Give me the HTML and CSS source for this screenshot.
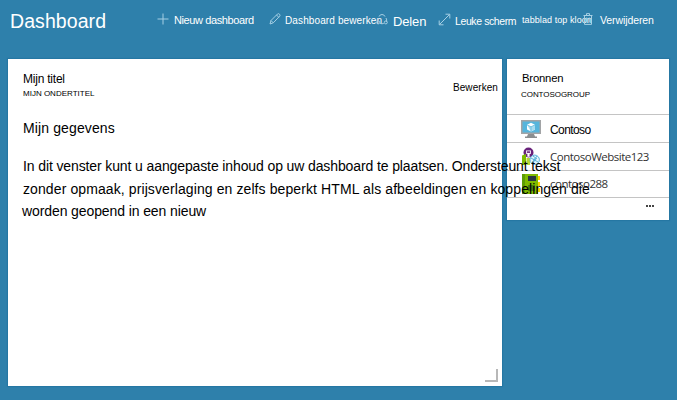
FILE: index.html
```html
<!DOCTYPE html>
<html lang="nl">
<head>
<meta charset="utf-8">
<title>Dashboard</title>
<link rel="stylesheet" href="styles.css">
</head>
<body>
<header class="toolbar">
  <h1>Dashboard</h1>
  <div class="action new"><svg width="12" height="12" viewBox="0 0 12 12"><path d="M6 .5v11M.5 6h11"/></svg><span>Nieuw dashboard</span></div>
  <div class="action edit"><svg width="12" height="12" viewBox="0 0 12 12"><path d="M1 11l1-3.5L8.5 1q1-.8 2 .2t.2 2L4.3 9.8 1 11M2 7.5l2.3 2.3M7.5 2l2.3 2.3"/></svg><span>Dashboard bewerken</span></div>
  <div class="action share"><svg width="12" height="12" viewBox="0 0 12 12"><path d="M3 3.6a3.2 3.2 0 0 1 6 0M2 5Q.6 7 1.8 9M10 5q1.4 2 .2 4M4.2 10.4q1.8.8 3.6 0"/><circle cx="2.2" cy="9.4" r="1.5"/><circle cx="9.8" cy="9.4" r="1.5"/></svg><span>Delen</span></div>
  <div class="action full"><svg width="13" height="13" viewBox="0 0 13 13"><path d="M1.5 11.5l10-10M7.5 1.2h4.3v4.3M1.2 7.5v4.3h4.3"/></svg><span>Leuke scherm</span></div>
  <div class="action clone"><span>tabblad top kloon</span></div>
  <div class="action delete"><svg width="10" height="12" viewBox="0 0 10 12"><path d="M.5 2.5h9M3.5 2V.6h3V2M1.5 3v8.4h7V3M3.7 4.5v5M6.3 4.5v5"/></svg><span>Verwijderen</span></div>
</header>
<main class="board">
  <section class="tile note">
    <div class="note-head">
      <div>
        <h2>Mijn titel</h2>
        <p class="subtitle">MIJN ONDERTITEL</p>
      </div>
      <span class="edit-link">Bewerken</span>
    </div>
    <h3>Mijn gegevens</h3>
    <p class="copy"><span class="line first">In dit venster kunt u aangepaste inhoud op uw dashboard te plaatsen. Ondersteunt tekst</span><span class="line second">zonder opmaak, prijsverlaging en zelfs beperkt HTML als afbeeldingen en koppelingen die</span><span class="line third">worden geopend in een nieuw</span></p>
    <i class="grip"></i>
  </section>
  <section class="tile resources">
    <div class="resources-head">
      <h2>Bronnen</h2>
      <p class="subtitle">CONTOSOGROUP</p>
    </div>
    <div class="row machine">
      <svg width="20" height="20" viewBox="0 0 20 20"><path fill="#a2a4a6" d="M0 1h20v14H0z"/><path fill="#56b5dc" d="M1.5 2.5h17v11h-17z"/><path fill="#8b8e90" d="M7 15h6l1 2.5h2V19H4v-1.5h2z"/><path fill="#fff" d="M10 3.8l4 2v4.6l-4 2.1-4-2.1V5.8z"/><path fill="#a9dcf0" d="M6 5.8l4 2 4-2v4.6l-4 2.1z"/><path fill="none" stroke="#56b5dc" stroke-width=".7" d="M6 5.8l4 2 4-2M10 7.8v4.7"/></svg>
      <span>Contoso</span>
    </div>
    <div class="row site">
      <svg width="20" height="20" viewBox="0 0 20 20"><circle cx="7.5" cy="5.5" r="5" fill="#68217a"/><path d="M5 3.5h5v3.2H8.6v3H6.4v-3H5z" fill="#fff"/><path d="M5.8 4.3h3.4v1.6H5.8z" fill="#68217a"/><path fill="#7fba00" d="M1 8.5l4-1.5v11H1z"/><path fill="#b8d432" d="M5.5 11H9v7H5.5z"/><circle cx="13.7" cy="12.8" r="4.7" fill="#e4f4fb" stroke="#59b4d9"/><path d="M10 11l7 4M11 16l5-7M12 9l4 3" fill="none" stroke="#59b4d9"/><circle cx="13.6" cy="13" r="1.4" fill="#59b4d9"/></svg>
      <span>ContosoWebsite123</span>
    </div>
    <div class="row storage">
      <svg width="20" height="20" viewBox="0 0 20 20"><path fill="#ffd500" d="M16 2h3v4h-3zM16 8h3v4h-3zM16 14h3v4h-3z"/><path fill="#7fba00" d="M1 0h16v20H1z"/><path fill="#5d9c04" d="M1 0h3v20H1z"/><path fill="#293640" d="M7 2h8v5H7z"/><path fill="#47800e" d="M7 11h7v6H7z"/></svg>
      <span>contoso288</span>
    </div>
    <div class="more"><i></i><i></i><i></i></div>
  </section>
</main>
</body>
</html>
```
FILE: styles.css
```css
* { box-sizing: border-box; }
body {
  margin: 0;
  height: 400px;
  overflow: hidden;
  background: #2e80ab;
  color: #000;
  font-family: "Liberation Sans", Arial, sans-serif;
}
h1, h2, h3, p { margin: 0; font-weight: 400; }
.toolbar {
  display: grid;
  grid-template-columns: 147px 112px 107px 62px 84px 61px 94px;
  height: 59px;
  padding: 0 0 0 10px;
  color: #fff;
  white-space: nowrap;
}
h1 { padding-top: 9px; font-size: 19.5px; line-height: 24px; letter-spacing: .08px; }
.action { display: flex; align-items: flex-start; line-height: 14px; }
.action svg { flex: none; margin-top: 13px; fill: none; stroke: #a5cfe4; stroke-width: 1; }
.new { font-size: 11px; letter-spacing: -.4px; }
.new span { margin: 13px 0 0 5px; }
.edit { font-size: 10px; letter-spacing: .12px; }
.edit span { margin: 14px 0 0 4px; }
.share { font-size: 13px; letter-spacing: -.15px; }
.share span { margin: 15px 0 0 5px; }
.full { font-size: 10.5px; letter-spacing: -.4px; }
.full span { margin: 14px 0 0 4px; }
.clone { font-size: 9px; letter-spacing: .08px; }
.clone span { margin: 13px 0 0; }
.delete { font-size: 10.5px; letter-spacing: -.1px; }
.delete span { margin: 13px 0 0 7px; }
.board {
  display: grid;
  grid-template-columns: 494px 162px;
  gap: 5px;
  align-items: start;
  padding-left: 8px;
}
.tile { background: #fff; box-shadow: 0 0 1px 1px #2577a3; }
.note {
  position: relative;
  z-index: 1;
  height: 327px;
  padding: 13px 4px 0 15px;
  white-space: nowrap;
}
.note-head { display: flex; justify-content: space-between; height: 47px; }
h2 { font-size: 12px; line-height: 14px; letter-spacing: -.22px; }
.subtitle { font-size: 8px; line-height: 10px; }
.note .subtitle { margin-top: 3px; }
.edit-link { margin-top: 9px; font-size: 10px; line-height: 14px; letter-spacing: .07px; }
h3 { font-size: 14px; line-height: 18px; letter-spacing: .12px; }
.copy { margin-top: 18px; font-size: 14px; line-height: 22.5px; }
.line { display: block; }
.first { letter-spacing: -.115px; }
.second { letter-spacing: .1px; }
.third { margin-left: -1px; letter-spacing: -.1px; }
.grip {
  position: absolute;
  right: 4px;
  bottom: 4px;
  width: 13px;
  height: 13px;
  border: solid #b8b8b8;
  border-width: 0 2px 2px 0;
}
.resources { height: 161px; }
.resources-head { height: 55px; padding: 12px 0 0 15px; }
.resources h2 { font-size: 11.3px; letter-spacing: -.2px; }
.resources .subtitle { margin: 5px 0 0 -1px; letter-spacing: -.06px; }
.row {
  display: flex;
  align-items: center;
  height: 28px;
  padding-left: 14px;
  border-top: 1px solid #c4c4c4;
}
.row svg { margin-right: 9px; }
.machine span { padding-top: 3px; font-size: 12px; line-height: 14px; letter-spacing: -.6px; }
.site span, .storage span {
  color: #333;
  font: 11.5px/16px "Open Sans", "Noto Sans", sans-serif;
  letter-spacing: -.5px;
}
.storage { height: 27px; }
.more { display: flex; gap: 1px; justify-content: flex-end; padding: 7px 15px 0 0; border-top: 1px solid #c4c4c4; }
.more i { width: 2px; height: 2px; background: #444; }
```
